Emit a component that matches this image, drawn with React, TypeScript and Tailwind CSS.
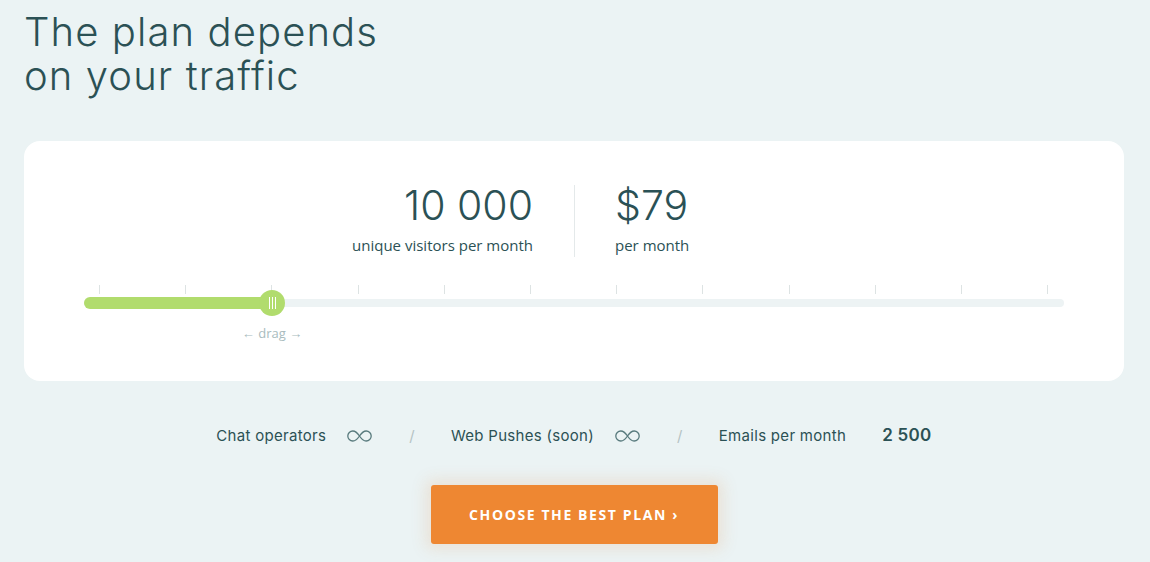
import React from 'react';

const ink = 'text-[#2b5155]';

function Infinity() {
  return (
    <svg width="27" height="14" viewBox="0 0 27 14" fill="none" className="text-[#587a7d]">
      <path
        d="M13.5 7c-2-3-4-5-6.7-5A5 5 0 0 0 1.8 7a5 5 0 0 0 5 5c2.7 0 4.7-2 6.7-5zm0 0c2 3 4 5 6.7 5a5 5 0 0 0 5-5 5 5 0 0 0-5-5c-2.7 0-4.7 2-6.7 5z"
        stroke="currentColor"
        strokeWidth="1.3"
      />
    </svg>
  );
}

function Slider() {
  const ticks = Array.from({ length: 12 }, (_, i) => 15 + i * 86.2);
  const value = 188;
  return (
    <div className="relative mx-[60px] mt-[28px] h-[50px]">
      {ticks.map((x) => (
        <div key={x} className="absolute top-0 h-[9px] w-px bg-[#dde3e3]" style={{ left: x }} />
      ))}
      <div className="absolute left-0 right-0 top-[14px] h-[8px] rounded-full bg-[#edf3f4]" />
      <div className="absolute left-0 top-[12px] h-[12px] rounded-full bg-[#b1dc6d]" style={{ width: value }} />
      <div
        className="absolute top-[5px] flex h-[26px] w-[26px] items-center justify-center gap-[2px] rounded-full bg-[#b1dc6d]"
        style={{ left: value - 13 }}
      >
        <span className="h-[12px] w-px bg-white" />
        <span className="h-[12px] w-px bg-white" />
        <span className="h-[12px] w-px bg-white" />
      </div>
      <div
        className="absolute top-[39px] -translate-x-1/2 whitespace-nowrap text-[13px] text-[#a9bcbe] font-['Open_Sans',sans-serif]"
        style={{ left: value }}
      >
        ← drag →
      </div>
    </div>
  );
}

export default function App() {
  return (
    <div className="h-[562px] w-[1150px] overflow-hidden bg-[#ebf3f4] font-['Open_Sans',sans-serif]">
      <div className="ml-[24px] w-[1100px]">
        <h1 className={`pt-[10px] text-[40px] font-light leading-[44px] tracking-[1.1px] ${ink} font-['Inter',sans-serif]`}>
          The plan depends
          <br />
          on your traffic
        </h1>

        <div className="mt-[43px] h-[240px] rounded-[16px] bg-white pt-[44px]">
          <div className="grid grid-cols-2">
            <div className="pr-[41px] text-right">
              <div className={`text-[41px] font-light leading-[40px] ${ink} font-['Inter',sans-serif]`}>10 000</div>
              <div className={`mt-[9px] text-[15px] ${ink}`}>unique visitors per month</div>
            </div>
            <div className="border-l border-[#e4e9ea] pl-[40px]">
              <div className={`text-[41px] font-light leading-[40px] ${ink} font-['Inter',sans-serif]`}>$79</div>
              <div className={`mt-[9px] text-[15px] ${ink}`}>per month</div>
            </div>
          </div>
          <Slider />
        </div>

        <div className={`mt-[42px] flex items-center justify-center text-[15px] tracking-[0.3px] ${ink} font-['Inter',sans-serif]`}>
          <span>Chat operators</span>
          <span className="ml-[20px]"><Infinity /></span>
          <span className="mx-[36px] text-[#b5c3c4]">/</span>
          <span>Web Pushes (soon)</span>
          <span className="ml-[20px]"><Infinity /></span>
          <span className="mx-[36px] text-[#b5c3c4]">/</span>
          <span>Emails per month</span>
          <span className="ml-[36px] text-[17px] font-semibold">2 500</span>
        </div>

        <div className="mt-[36px] flex justify-center">
          <button className="h-[59px] w-[287px] rounded-[3px] bg-[#ee8732] text-[14px] font-bold tracking-[1.6px] text-white shadow-[0_0_14px_6px_rgba(233,225,214,0.9)]">
            CHOOSE THE BEST PLAN ›
          </button>
        </div>
      </div>
    </div>
  );
}
